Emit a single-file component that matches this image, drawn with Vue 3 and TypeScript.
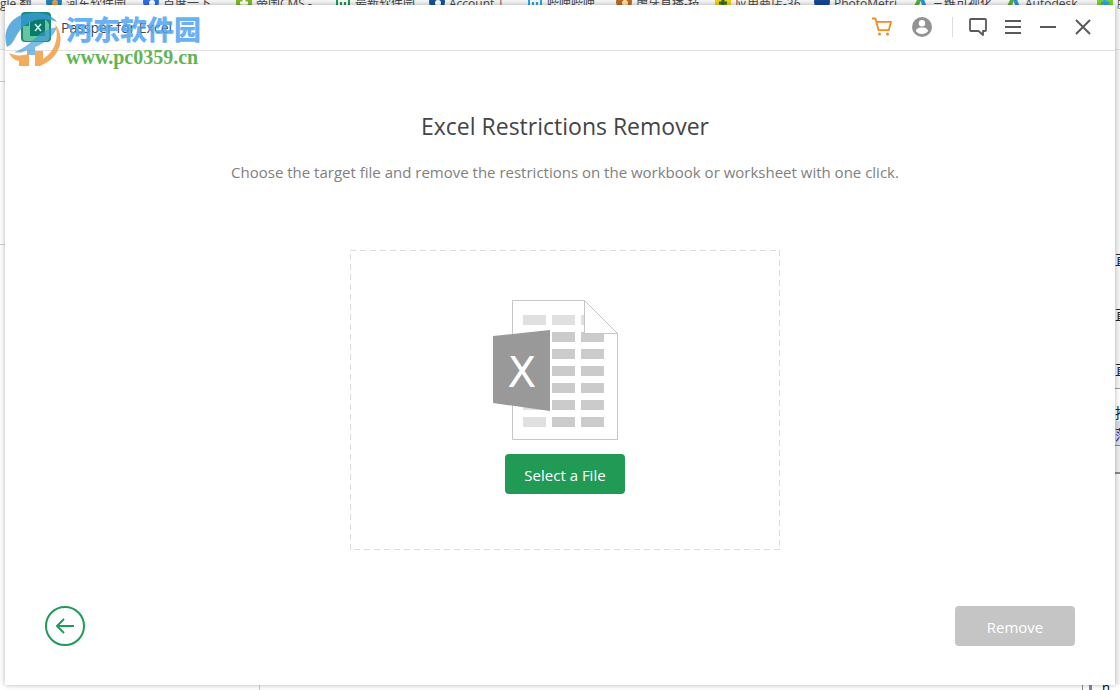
<script setup lang="ts">
interface Bookmark {
  label: string
  width: number
  color: string
  accent: string
  shape: 'round' | 'square' | 'peak' | 'outline'
}

const bookmarks: Bookmark[] = [
  { label: '河东软件园', width: 97, color: '#1c83bd', accent: '#f0a040', shape: 'round' },
  { label: '百度一下', width: 93, color: '#2f6de8', accent: '#ffffff', shape: 'round' },
  { label: '帝国CMS -', width: 99, color: '#7cb928', accent: '#ffffff', shape: 'square' },
  { label: '最新软件园', width: 94, color: '#189b50', accent: '#ffffff', shape: 'outline' },
  { label: 'Account |', width: 98, color: '#175292', accent: '#ffffff', shape: 'round' },
  { label: '哔哩哔哩', width: 89, color: '#28a8e0', accent: '#ffffff', shape: 'outline' },
  { label: '虎牙直播-技', width: 99, color: '#b36a2b', accent: '#ffe0a0', shape: 'round' },
  { label: '应用商店-36', width: 99, color: '#f2cf18', accent: '#2e7030', shape: 'square' },
  { label: 'PhotoMetri', width: 98, color: '#164795', accent: '#164795', shape: 'round' },
  { label: '三维可视化', width: 93, color: '#2b94d6', accent: '#5cae35', shape: 'peak' },
  { label: 'Autodesk', width: 92, color: '#2b94d6', accent: '#5cae35', shape: 'peak' },
  { label: '腾讯', width: 60, color: '#7ed02c', accent: '#2aa5e8', shape: 'square' },
]

const sheetRows: number[] = [32, 49, 66, 83, 100, 117]
</script>

<template>
  <div class="desktop">
    <div class="backdrop" aria-hidden="true">
      <div class="bookmarks">
        <span class="first-bookmark">gle 翻</span>
        <span v-for="b in bookmarks" :key="b.label" class="bookmark" :style="{ width: b.width + 'px' }">
          <svg width="16" height="16" viewBox="0 0 16 16">
            <template v-if="b.shape === 'round'">
              <circle cx="8" cy="8" r="8" :fill="b.color" />
              <circle cx="9" cy="9" r="3" :fill="b.accent" />
            </template>
            <template v-else-if="b.shape === 'square'">
              <rect width="16" height="16" rx="2" :fill="b.color" />
              <path d="M8 5v8M4 9h8" :stroke="b.accent" stroke-width="3" />
            </template>
            <template v-else-if="b.shape === 'peak'">
              <path d="M8 0 0 16h5L10 4z" :fill="b.accent" />
              <path d="M6 0h4l6 16h-4z" :fill="b.color" />
            </template>
            <path v-else d="M2 4v10h12V4M6 8v3M10 8v3" fill="none" :stroke="b.color" stroke-width="2" />
          </svg>
          <span>{{ b.label }}</span>
        </span>
      </div>
      <div class="behind">
        <div class="left-edge">
          <i class="rule"></i>
          <i class="rule"></i>
        </div>
        <div class="right-edge">
          <span class="glyph">直</span>
          <span class="glyph">直</span>
          <span class="glyph">直</span>
          <span class="glyph boxed">推</span>
          <span class="glyph chosen">落</span>
          <i class="panel"></i>
        </div>
      </div>
      <div class="bottom-edge"><i class="seam"></i><i class="thumb"></i><span>n.</span></div>
    </div>

    <main class="window">
      <header class="titlebar">
        <div class="brand">
          <svg class="app-icon" width="32" height="32" viewBox="0 0 32 32" aria-hidden="true">
            <rect width="30" height="30" rx="4" fill="#128b80" />
            <path d="M2 14h6V8h17l3 4v14a3 3 0 0 1-3 3H5a3 3 0 0 1-3-3z" fill="#66c4a0" />
            <rect x="9" y="7" width="15" height="17" fill="#087c68" />
            <path d="m14 12 6 7m0-7-6 7" stroke="#d6f2e7" stroke-width="1.5" />
          </svg>
          <span class="app-name">Passper for Excel</span>
        </div>
        <nav class="tools">
          <button class="tool cart" type="button" aria-label="Buy">
            <svg width="20" height="20" viewBox="0 0 20 20" fill="none" stroke="#f58a1f" stroke-width="1.8">
              <path d="M0 1.5h3.4l3.2 11.7h10.2L19 4.8H5" stroke-linejoin="round" />
              <circle cx="7.5" cy="17" r="1.5" fill="#f58a1f" stroke="none" />
              <circle cx="15.5" cy="17" r="1.5" fill="#f58a1f" stroke="none" />
            </svg>
          </button>
          <button class="tool account" type="button" aria-label="Account">
            <svg width="20" height="20" viewBox="0 0 20 20">
              <circle cx="10" cy="10" r="10" fill="#929292" />
              <circle cx="10" cy="6.3" r="3.2" fill="#fff" />
              <path d="M3.8 14c1-3 4-3.4 6.2-3.4s5.2.4 6.2 3.4c-1.5 2-3.7 3-6.2 3s-4.7-1-6.2-3z" fill="#fff" />
            </svg>
          </button>
          <i class="divider"></i>
          <button class="tool feedback" type="button" aria-label="Feedback">
            <svg width="18" height="18" viewBox="0 0 18 18" fill="none" stroke="#5a5a5a" stroke-width="1.8">
              <path d="M2 1h14a1 1 0 0 1 1 1v10a1 1 0 0 1-1 1h-2v4l-4.500-4H2a1 1 0 0 1-1-1V2a1 1 0 0 1 1-1z" stroke-linejoin="round" />
            </svg>
          </button>
          <button class="tool menu" type="button" aria-label="Menu">
            <svg width="16" height="16" viewBox="0 0 16 16" stroke="#5a5a5a" stroke-width="2">
              <path d="M0 2h16M0 8h16M0 14h16" />
            </svg>
          </button>
          <button class="tool minimize" type="button" aria-label="Minimize">
            <svg width="16" height="16" viewBox="0 0 16 16" stroke="#5a5a5a" stroke-width="2"><path d="M0 8h16" /></svg>
          </button>
          <button class="tool close" type="button" aria-label="Close">
            <svg width="16" height="16" viewBox="0 0 16 16" stroke="#5a5a5a" stroke-width="2"><path d="m1 1 14 14M15 1 1 15" /></svg>
          </button>
        </nav>
      </header>

      <section class="content">
        <h1>Excel Restrictions Remover</h1>
        <p>Choose the target file and remove the restrictions on the workbook or worksheet with one click.</p>
        <div class="dropzone">
          <svg class="dash" aria-hidden="true">
            <rect width="100%" height="100%" fill="none" stroke="#dcdcdc" stroke-width="2" stroke-dasharray="6 4" />
          </svg>
          <svg width="144" height="140" viewBox="0 0 144 140" aria-hidden="true">
            <path d="M19.500.5h72l33 33v106h-105z" fill="#fff" stroke="#c6c6c6" />
            <rect x="30" y="15" width="23" height="10" fill="#e0e0e0" />
            <rect x="59" y="15" width="23" height="10" fill="#e0e0e0" />
            <rect x="88" y="15" width="4" height="10" fill="#e0e0e0" />
            <rect x="30" y="100" width="23" height="10" fill="#e0e0e0" />
            <rect x="30" y="117" width="23" height="10" fill="#e0e0e0" />
            <g v-for="y in sheetRows" :key="y" fill="#cbcbcb">
              <rect x="59" :y="y" width="23" height="10" />
              <rect x="88" :y="y" width="23" height="10" />
            </g>
            <path d="M91.500.5v33h33z" fill="#fff" stroke="#c6c6c6" />
            <path d="M0 36 57 30v81L0 103z" fill="#999" />
            <text x="29" y="87" class="sheet-mark">X</text>
          </svg>
          <button class="action primary" type="button">Select a File</button>
        </div>
      </section>

      <footer class="actions">
        <button class="back" type="button" aria-label="Back">
          <svg width="40" height="40" viewBox="0 0 40 40" fill="none" stroke="#219a59" stroke-width="2">
            <circle cx="20" cy="20" r="19" />
            <path d="M29 20H12m7-7-7 7 7 7" stroke-linejoin="round" />
          </svg>
        </button>
        <button class="action" type="button" disabled>Remove</button>
      </footer>
    </main>

    <aside class="watermark">
      <svg width="58" height="58" viewBox="0 0 58 58" aria-hidden="true">
        <path d="M2 36C-4 18 8 3 26 2c11-1 21 2 26 9-12-5-27-3-36 7-7 8-6 14-14 18z" fill="#3a98d5" opacity=".8" />
        <path d="M9 41C18 39 27 30 35 23c6-4 11-6 17-7-3 10-12 16-22 20v8h-8v-5c-5 3-9 3-13 2z" fill="#3a98d5" opacity=".65" />
        <path d="M50 13c7 8 7 20 2 28-4 7-10 11-17 14h-5V40h8v8c11-7 17-20 12-35z" fill="#f2a24c" opacity=".9" />
        <path d="M4 42c6 3 12 3 20 1v12H14v-5C9 49 6 46 4 42z" fill="#f2a24c" opacity=".9" />
      </svg>
      <div class="watermark-text">
        <strong>河东软件园</strong>
        <span>www.pc0359.cn</span>
      </div>
    </aside>
  </div>
</template>

<style>
body {
  margin: 0;
}
</style>

<style scoped>
.desktop {
  position: relative;
  box-sizing: border-box;
  min-height: 100vh;
  padding: 5px;
  display: flex;
  overflow: hidden;
  background: #fff;
  font-family: "Open Sans", "Noto Sans", "Noto Sans CJK SC", sans-serif;
}
button {
  padding: 0;
  border: 0;
  background: none;
  font: inherit;
}
svg {
  display: block;
}
.backdrop {
  position: absolute;
  inset: 0;
  display: flex;
  flex-direction: column;
  overflow: hidden;
}
.bookmarks {
  display: flex;
  flex: none;
  height: 49px;
  border-bottom: 1px solid #dcdcdc;
  background: #f5f5f5;
  color: #444;
  font-size: 12px;
  line-height: 8px;
  white-space: nowrap;
}
.first-bookmark {
  flex: none;
  width: 46px;
}
.bookmark {
  display: flex;
  flex: none;
  gap: 4px;
}
.bookmark svg {
  margin-top: -6px;
}
.behind {
  display: flex;
  flex: 1;
  justify-content: space-between;
}
.left-edge {
  width: 5px;
  padding-top: 31px;
}
.rule {
  display: block;
  height: 162px;
  border-top: 1px solid #d0d0d0;
}
.right-edge {
  width: 5px;
  padding-top: 200px;
  overflow: hidden;
  background: #f5f5f5;
}
.glyph {
  display: block;
  height: 20px;
  margin-bottom: 35px;
  color: #222;
  font-size: 14px;
  line-height: 20px;
}
.glyph:nth-child(3) {
  margin-bottom: 8px;
}
.glyph.boxed {
  height: 28px;
  margin-bottom: 4px;
  border-top: 1px solid #999;
  background: #fff;
  line-height: 48px;
}
.glyph.chosen {
  margin: 0;
  padding-top: 4px;
  color: #2020a0;
  background: #d8dce8;
}
.panel {
  display: block;
  height: 26px;
  border-top: 1px solid #888;
  border-bottom: 2px solid #888;
  background: #eee;
}
.bottom-edge {
  display: flex;
  flex: none;
  height: 5px;
  font-size: 13px;
  line-height: 5px;
}
.seam {
  width: 259px;
  border-right: 1px solid #ccc;
}
.thumb {
  width: 6px;
  margin: 0 10px 0 auto;
  border-left: 1px solid #888;
  border-right: 3px solid #888;
}
.bottom-edge span {
  width: 18px;
}
.window {
  position: relative;
  display: flex;
  flex: 1;
  flex-direction: column;
  min-width: 0;
  background: #fff;
  box-shadow: 0 0 5px rgba(0, 0, 0, 0.3);
}
.titlebar {
  display: flex;
  align-items: center;
  justify-content: space-between;
  height: 45px;
  padding: 0 24px 0 16px;
  border-bottom: 1px solid #e0e0e0;
}
.brand {
  display: flex;
  align-items: center;
  gap: 8px;
}
.app-name {
  color: #444;
  font-size: 14px;
}
.tools {
  display: flex;
  align-items: center;
  padding-bottom: 2px;
}
.cart,
.account {
  margin-right: 20px;
}
.divider {
  width: 1px;
  height: 20px;
  margin-right: 16px;
  background: #ddd;
}
.feedback {
  margin-right: 18px;
}
.menu,
.minimize {
  margin-right: 19px;
}
.content {
  display: flex;
  flex: 1;
  flex-direction: column;
  align-items: center;
  padding: 59px 0 0 10px;
}
h1 {
  margin: 0;
  color: #444;
  font-size: 23px;
  font-weight: 400;
  line-height: 32px;
}
p {
  margin: 18px 0 0;
  color: #808080;
  font-size: 15px;
  line-height: 24px;
}
.dropzone {
  position: relative;
  box-sizing: border-box;
  display: flex;
  flex-direction: column;
  align-items: center;
  gap: 14px;
  width: 430px;
  max-width: 100%;
  height: 300px;
  margin-top: 66px;
  padding-top: 50px;
}
.dash {
  position: absolute;
  inset: 0;
  width: 100%;
  height: 100%;
}
.sheet-mark {
  fill: #fff;
  font-family: "DejaVu Sans", sans-serif;
  font-size: 42px;
  text-anchor: middle;
}
.action {
  width: 120px;
  height: 40px;
  padding-top: 2px;
  border-radius: 4px;
  background: #c5c5c5;
  color: #fff;
  font-size: 15px;
}
.primary {
  background: #219a55;
}
.actions {
  display: flex;
  justify-content: space-between;
  padding: 0 40px 39px;
}
.watermark {
  position: absolute;
  top: 11px;
  left: 5px;
  display: flex;
  gap: 3px;
  pointer-events: none;
}
.watermark-text {
  display: flex;
  flex-direction: column;
}
.watermark strong {
  color: #50a4f2;
  font-family: "Noto Sans CJK SC", sans-serif;
  font-size: 27px;
  font-weight: 900;
  line-height: 36px;
  opacity: 0.85;
}
.watermark span {
  color: #62b455;
  font-family: "Liberation Serif", serif;
  font-size: 20px;
  font-weight: 700;
  line-height: 20px;
}
</style>
